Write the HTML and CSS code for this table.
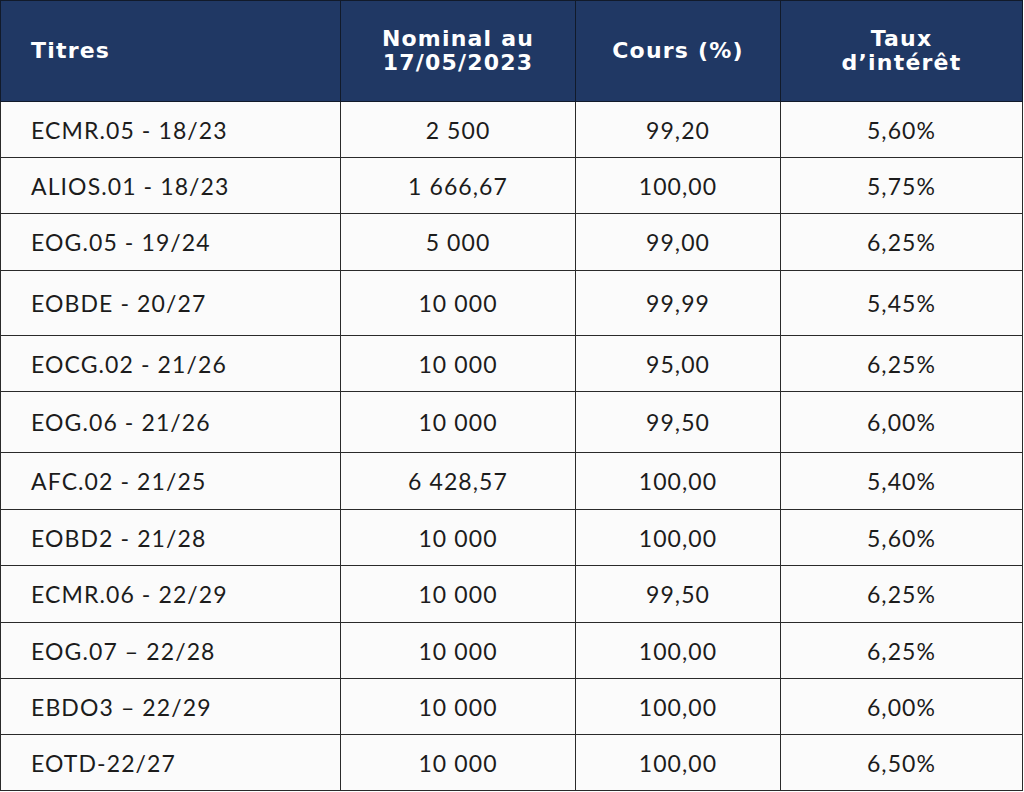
FILE: index.html
```html
<!DOCTYPE html>
<html lang="fr">
<head>
<meta charset="utf-8">
<title>Titres</title>
<link rel="stylesheet" href="styles.css">
</head>
<body>
<table class="bonds">
  <colgroup>
    <col class="c1"><col class="c2"><col class="c3"><col class="c4">
  </colgroup>
  <thead>
    <tr class="head">
      <th class="left">Titres</th>
      <th>Nominal au<br>17/05/2023</th>
      <th>Cours (%)</th>
      <th>Taux<br>d’intérêt</th>
    </tr>
  </thead>
  <tbody>
    <tr><td class="left">ECMR.05 - 18/23</td><td>2 500</td><td>99,20</td><td>5,60%</td></tr>
    <tr><td class="left">ALIOS.01 - 18/23</td><td>1 666,67</td><td>100,00</td><td>5,75%</td></tr>
    <tr class="r57"><td class="left">EOG.05 - 19/24</td><td>5 000</td><td>99,00</td><td>6,25%</td></tr>
    <tr class="r65"><td class="left">EOBDE - 20/27</td><td>10 000</td><td>99,99</td><td>5,45%</td></tr>
    <tr><td class="left">EOCG.02 - 21/26</td><td>10 000</td><td>95,00</td><td>6,25%</td></tr>
    <tr class="r61"><td class="left">EOG.06 - 21/26</td><td>10 000</td><td>99,50</td><td>6,00%</td></tr>
    <tr class="r57"><td class="left">AFC.02 - 21/25</td><td>6 428,57</td><td>100,00</td><td>5,40%</td></tr>
    <tr><td class="left">EOBD2 - 21/28</td><td>10 000</td><td>100,00</td><td>5,60%</td></tr>
    <tr class="r57"><td class="left">ECMR.06 - 22/29</td><td>10 000</td><td>99,50</td><td>6,25%</td></tr>
    <tr><td class="left">EOG.07 – 22/28</td><td>10 000</td><td>100,00</td><td>6,25%</td></tr>
    <tr><td class="left">EBDO3 – 22/29</td><td>10 000</td><td>100,00</td><td>6,00%</td></tr>
    <tr><td class="left">EOTD-22/27</td><td>10 000</td><td>100,00</td><td>6,50%</td></tr>
  </tbody>
</table>
</body>
</html>
```

FILE: styles.css
```css
html, body {
  margin: 0;
  padding: 0;
  background: #ffffff;
}

.bonds {
  border-collapse: collapse;
  table-layout: fixed;
  width: 1022px;
  font-family: Lato, "Open Sans", "Liberation Sans", sans-serif;
  color: #1c1c1c;
}

.c1 { width: 340px; }
.c2 { width: 235px; }
.c3 { width: 205px; }
.c4 { width: 242px; }

.bonds th,
.bonds td {
  border: 1px solid #2a2a2a;
  text-align: center;
  padding: 0;
}

.bonds th.left,
.bonds td.left {
  text-align: left;
  padding-left: 30px;
}

.bonds th {
  background: #203864;
  color: #ffffff;
  font-family: "DejaVu Sans", "Liberation Sans", sans-serif;
  font-weight: bold;
  font-size: 22px;
  line-height: 24px;
  letter-spacing: 1.2px;
  border-color: #111a2a;
  height: 100px;
}

.bonds td {
  background: #fbfbfb;
  font-size: 23px;
  letter-spacing: 1.1px;
  height: 55px;
}

.bonds tr.r57 td { height: 56px; }
.bonds tr.r61 td { height: 60px; }
.bonds tr.r65 td { height: 64px; }
```
